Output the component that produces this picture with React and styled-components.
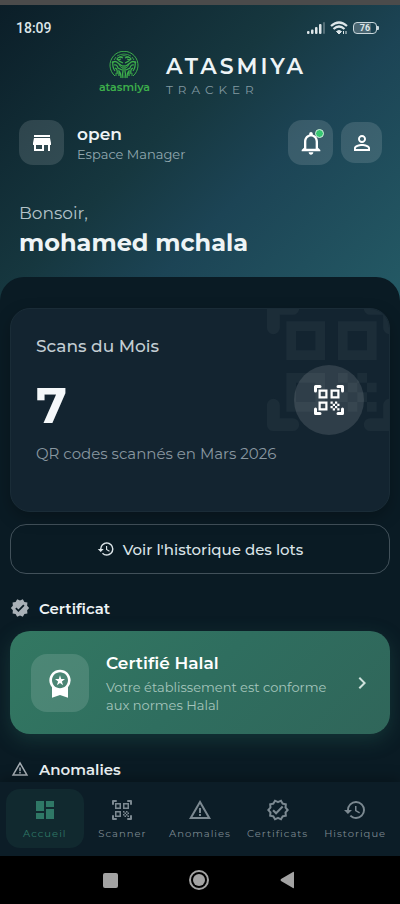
import React from 'react'
import styled, { createGlobalStyle } from 'styled-components'
import {
  MdChevronRight,
  MdDashboard,
  MdHistory,
  MdNotificationsNone,
  MdOutlineVerified,
  MdPersonOutline,
  MdStore,
  MdVerified,
  MdWarningAmber,
  MdWorkspacePremium,
} from 'react-icons/md'

const FONT = "Montserrat, Inter, 'Liberation Sans', sans-serif"

const GlobalStyle = createGlobalStyle`
  * {
    box-sizing: border-box;
  }

  body {
    margin: 0;
    background: #0a1b24;
    color: #eef4f6;
    font-family: ${FONT};
  }

  h1, h2, h3, p {
    margin: 0;
  }

  button {
    font-family: inherit;
    color: inherit;
    border: 0;
    padding: 0;
    cursor: pointer;
  }
`

const Screen = styled('div')`
  display: flex;
  flex-direction: column;
  min-height: 100vh;
  border-top: 5px solid #4b4b4b;
`

const Header = styled('header')`
  padding: 11px 18px 39px 19px;
  background: linear-gradient(135deg, #0b1e28 0%, #16373f 42%, #1c4455 62%, #245a65 100%);
`

const StatusBar = styled('div')`
  display: flex;
  align-items: center;
  justify-content: space-between;
  height: 24px;
  padding-right: 3px;
  font-family: Roboto, sans-serif;
`

const Time = styled('span')`
  margin-left: -3px;
  color: #dde6e9;
  font-size: 14px;
  font-weight: 500;
`

const StatusIcons = styled('div')`
  display: flex;
  align-items: center;
  gap: 5px;
`

const Battery = styled('span')`
  display: flex;
  align-items: center;
  color: #dde6e9;

  span {
    width: 24px;
    height: 12px;
    border: 1px solid #c9d6db;
    border-radius: 4px;
    background: linear-gradient(90deg, #4b6672 0 76%, transparent 76%);
    font-size: 9px;
    font-weight: 700;
    line-height: 10px;
    text-align: center;
  }

  &:after {
    content: '';
    width: 2px;
    height: 4px;
    background: #c9d6db;
    border-radius: 0 1px 1px 0;
  }
`

const Brand = styled('div')`
  display: flex;
  align-items: flex-end;
  justify-content: center;
  gap: 16px;
  height: 60px;
  padding-left: 4px;
`

const Logo = styled('div')`
  display: flex;
  flex-direction: column;
  align-items: center;
  padding-bottom: 6px;
  color: #3dae4b;
  font-size: 11px;
  font-weight: 600;
  line-height: 14px;
`

const BrandName = styled('h1')`
  font-size: 22px;
  font-weight: 600;
  line-height: 26px;
  letter-spacing: 3px;
`

const BrandSub = styled('p')`
  color: #8299a1;
  font-size: 12px;
  font-weight: 400;
  line-height: 20px;
  letter-spacing: 5px;
`

const SpaceRow = styled('div')`
  display: flex;
  align-items: center;
  margin-top: 20px;
`

const IconTile = styled('div')`
  display: flex;
  align-items: center;
  justify-content: center;
  flex-shrink: 0;
  width: ${({ size }) => size}px;
  height: ${({ size }) => size}px;
  border-radius: ${({ radius }) => radius || 14}px;
  background: rgba(255, 255, 255, 0.13);
  color: #fff;
`

const SpaceText = styled('div')`
  flex: 1;
  margin-left: 13px;
`

const SpaceName = styled('h2')`
  font-size: 17px;
  font-weight: 600;
  line-height: 22px;
`

const SpaceRole = styled('p')`
  color: #93a9b1;
  font-size: 13px;
  line-height: 18px;
`

const Actions = styled('div')`
  display: flex;
  align-items: center;
  gap: 8px;
`

const BellWrap = styled('span')`
  position: relative;
  display: flex;
`

const Dot = styled('span')`
  position: absolute;
  top: 0;
  right: 1px;
  width: 9px;
  height: 9px;
  border: 1px solid #d4efe0;
  border-radius: 50%;
  background: #35c771;
`

const Greeting = styled('p')`
  margin-top: 37px;
  color: #b3c3c9;
  font-size: 17px;
  font-weight: 400;
  line-height: 22px;
`

const UserName = styled('h2')`
  font-size: 24px;
  font-weight: 700;
  line-height: 38px;
`

const Sheet = styled('main')`
  position: relative;
  flex: 1;
  margin-top: -24px;
  padding: 31px 10px 0;
  border-radius: 24px 24px 0 0;
  background: #0a1b24;
`

const ScanCard = styled('section')`
  position: relative;
  display: flex;
  align-items: center;
  justify-content: space-between;
  padding: 25px 25px 45px;
  overflow: hidden;
  border: 1px solid #1a2c37;
  border-radius: 20px;
  background: #132430;
  box-shadow: 0 6px 16px rgba(0, 0, 0, 0.25);
`

const Watermark = styled('div')`
  position: absolute;
  top: -20px;
  right: -20px;
  color: #1c2d38;
`

const CardLabel = styled('h3')`
  color: #c3cdd3;
  font-size: 17px;
  font-weight: 500;
  line-height: 24px;
`

const ScanCount = styled('p')`
  padding: 16px 0 4px;
  color: #f5f8fa;
  font-size: 50px;
  font-weight: 700;
  line-height: 64px;
`

const CardNote = styled('p')`
  color: #8997a0;
  font-size: 15px;
  line-height: 24px;
`

const ScanBadge = styled('div')`
  position: relative;
  display: flex;
  align-items: center;
  justify-content: center;
  flex-shrink: 0;
  width: 70px;
  height: 70px;
  border-radius: 50%;
  background: rgba(255, 255, 255, 0.12);
  color: #fff;
`

const HistoryButton = styled('button')`
  display: flex;
  align-items: center;
  justify-content: center;
  gap: 8px;
  width: 100%;
  height: 50px;
  margin-top: 12px;
  border: 1px solid #42515a;
  border-radius: 16px;
  background: transparent;
  color: #dbe4e8;
  font-size: 15px;
  font-weight: 500;
`

const SectionTitle = styled('h2')`
  display: flex;
  align-items: center;
  gap: 9px;
  height: 24px;
  margin-top: ${({ top }) => top}px;
  font-size: 15px;
  font-weight: 600;

  svg {
    width: 20px;
    color: #a9b1b7;
  }
`

const CertCard = styled('a')`
  display: flex;
  align-items: center;
  gap: 17px;
  margin-top: 11px;
  padding: 20px 16px 20px 21px;
  border-radius: 20px;
  background: linear-gradient(135deg, #337862 0%, #2f6e5f 50%, #30665a 100%);
  box-shadow: 0 6px 20px rgba(47, 115, 98, 0.3);
  color: #fff;
  text-decoration: none;
`

const CertText = styled('div')`
  flex: 1;
`

const CertTitle = styled('h3')`
  font-size: 17px;
  font-weight: 600;
  line-height: 24px;
  padding-bottom: 3px;
`

const CertNote = styled('p')`
  color: #a5c5bc;
  font-size: 13px;
  line-height: 18px;
`

const CertArrow = styled(MdChevronRight)`
  color: #cfe2dc;
`

const TabBar = styled('nav')`
  position: relative;
  display: flex;
  padding: 7px 6px 8px;
  background: #0c1d27;
  box-shadow: 0 -4px 12px rgba(0, 0, 0, 0.25);
`

const Tab = styled('a')`
  display: flex;
  flex: 1 1 0;
  flex-direction: column;
  align-items: center;
  gap: 5px;
  min-width: 0;
  padding: 9px 0 7px;
  border-radius: 14px;
  background: ${({ $active }) => ($active ? '#11292f' : 'transparent')};
  color: ${({ $active }) => ($active ? '#2f7866' : '#7c8991')};
  font-size: 10px;
  font-weight: 400;
  line-height: 14px;
  letter-spacing: 1px;
  text-decoration: none;
`

const SystemBar = styled('div')`
  display: flex;
  align-items: center;
  justify-content: center;
  gap: 70px;
  height: 48px;
  padding-right: 2px;
  background: #000;

  button {
    display: flex;
    background: none;
    color: #a3a3a3;
  }
`

const QrScanIcon = ({ size }) => (
  <svg width={size} height={size} viewBox="0 0 24 24" fill="none" stroke="currentColor">
    <path
      d="M3 6V3H6M18 3H21V6M3 18V21H6M18 21H21V18"
      strokeWidth="2"
      strokeLinecap="round"
      strokeLinejoin="round"
    />
    <path
      d="M5.75 5.75h4.5v4.5h-4.5zM13.75 5.75h4.5v4.5h-4.5zM5.75 13.75h4.5v4.5h-4.5z"
      strokeWidth="1.5"
    />
    <path
      d="M13 13h1.5v1.5H13zM14.5 14.5H16V16h-1.5zM16 13h1.5v1.5H16zM13 16h1.5v1.5H13zM14.5 17.5H16V19h-1.5zM16 16h1.5v1.5H16zM17.5 14.5H19V16h-1.5zM17.5 17.5H19V19h-1.5z"
      fill="currentColor"
      stroke="none"
    />
  </svg>
)

const LogoMark = () => (
  <svg width="30" height="29" viewBox="0 0 30 29" fill="none" stroke="currentColor">
    <path d="M6 25A14 14 0 1 1 24 25" strokeWidth="1" />
    <path d="M8 5Q15 1 22 5M10 6Q15 3 20 6" strokeWidth="0.8" />
    {['', 'matrix(-1 0 0 1 30 0)'].map(transform => (
      <g key={transform} transform={transform || undefined}>
        <path d="M14 7Q10 5 8 8Q11 11 14 12M12 8L9 9M3 12Q6 9 9 12L13 15" strokeWidth="1.3" />
        <path d="M4 10Q3 16 6 20M5 14Q8 13 9 17L13 19" strokeWidth="1.2" />
        <path d="M6 17Q9 18 8 23M10 25V20Q12 22 12 27M14 14V20Q13 23 14 27" strokeWidth="1.3" />
        <path d="M7 6L5 9M10 13Q11 16 13 17M7 22V25" strokeWidth="0.9" />
      </g>
    ))}
  </svg>
)

const SignalIcon = () => (
  <svg width="18" height="12" viewBox="0 0 18 12" fill="#dde6e9">
    <rect x="0" y="9" width="2.5" height="3" rx="1" />
    <rect x="4" y="7.5" width="2.5" height="4.5" rx="1" />
    <rect x="8" y="5" width="2.5" height="7" rx="1" />
    <rect x="12" y="2" width="2.5" height="10" rx="1" />
    <rect x="16" y="0" width="2" height="12" rx="1" opacity="0.3" />
  </svg>
)

const WifiIcon = () => (
  <svg width="18" height="14" viewBox="0 0 18 14" fill="none" stroke="#dde6e9">
    <path d="M1 5Q9 -2 17 5M3.5 8Q9 3 14.5 8" strokeWidth="2.2" />
    <path d="M6.5 10.5Q9 8.5 11.5 10.5L9 13z" fill="#dde6e9" strokeWidth="1" />
    <path d="M13.5 13V10M16 10V13" strokeWidth="1" />
  </svg>
)

const TABS = [
  { label: 'Accueil', icon: MdDashboard, active: true },
  { label: 'Scanner', icon: QrScanIcon },
  { label: 'Anomalies', icon: MdWarningAmber },
  { label: 'Certificats', icon: MdOutlineVerified },
  { label: 'Historique', icon: MdHistory },
]

const DashboardHeader = () => (
  <Header>
    <StatusBar>
      <Time>18:09</Time>
      <StatusIcons>
        <SignalIcon />
        <WifiIcon />
        <Battery>
          <span>76</span>
        </Battery>
      </StatusIcons>
    </StatusBar>
    <Brand>
      <Logo>
        <LogoMark />
        atasmiya
      </Logo>
      <div>
        <BrandName>ATASMIYA</BrandName>
        <BrandSub>TRACKER</BrandSub>
      </div>
    </Brand>
    <SpaceRow>
      <IconTile size={45}>
        <MdStore size={24} />
      </IconTile>
      <SpaceText>
        <SpaceName>open</SpaceName>
        <SpaceRole>Espace Manager</SpaceRole>
      </SpaceText>
      <Actions>
        <IconTile as="button" size={45} aria-label="Notifications">
          <BellWrap>
            <MdNotificationsNone size={28} />
            <Dot />
          </BellWrap>
        </IconTile>
        <IconTile as="button" size={41} aria-label="Profil">
          <MdPersonOutline size={24} />
        </IconTile>
      </Actions>
    </SpaceRow>
    <Greeting>Bonsoir,</Greeting>
    <UserName>mohamed mchala</UserName>
  </Header>
)

const App = () => (
  <>
    <GlobalStyle />
    <Screen>
      <DashboardHeader />
      <Sheet>
        <ScanCard>
          <Watermark>
            <QrScanIcon size={155} />
          </Watermark>
          <div>
            <CardLabel>Scans du Mois</CardLabel>
            <ScanCount>7</ScanCount>
            <CardNote>QR codes scannés en Mars 2026</CardNote>
          </div>
          <ScanBadge>
            <QrScanIcon size={36} />
          </ScanBadge>
        </ScanCard>
        <HistoryButton>
          <MdHistory size={18} />
          Voir l'historique des lots
        </HistoryButton>
        <SectionTitle top={22}>
          <MdVerified size={20} />
          Certificat
        </SectionTitle>
        <CertCard href="#certificat">
          <IconTile size={58} radius={16}>
            <MdWorkspacePremium size={32} />
          </IconTile>
          <CertText>
            <CertTitle>Certifié Halal</CertTitle>
            <CertNote>Votre établissement est conforme aux normes Halal</CertNote>
          </CertText>
          <CertArrow size={24} />
        </CertCard>
        <SectionTitle top={23}>
          <MdWarningAmber size={18} />
          Anomalies
        </SectionTitle>
      </Sheet>
      <TabBar>
        {TABS.map(({ label, icon: Icon, active }) => (
          <Tab key={label} href={`#${label.toLowerCase()}`} $active={active}>
            <Icon size={24} />
            {label}
          </Tab>
        ))}
      </TabBar>
      <SystemBar>
        <button aria-label="Applications récentes">
          <svg width="18" height="18" viewBox="0 0 18 18" fill="currentColor">
            <rect x="2" y="2" width="15" height="15" rx="2" />
          </svg>
        </button>
        <button aria-label="Écran d'accueil">
          <svg width="20" height="20" viewBox="0 0 20 20" fill="currentColor">
            <circle cx="10" cy="10" r="9" fill="none" stroke="currentColor" strokeWidth="2" />
            <circle cx="10" cy="10" r="6" />
          </svg>
        </button>
        <button aria-label="Retour">
          <svg width="18" height="18" viewBox="0 0 18 18" fill="currentColor">
            <path d="M14 1Q15 0 15 2V16Q15 18 14 17L2 10Q1 9 2 8Z" />
          </svg>
        </button>
      </SystemBar>
    </Screen>
  </>
)

export default App
